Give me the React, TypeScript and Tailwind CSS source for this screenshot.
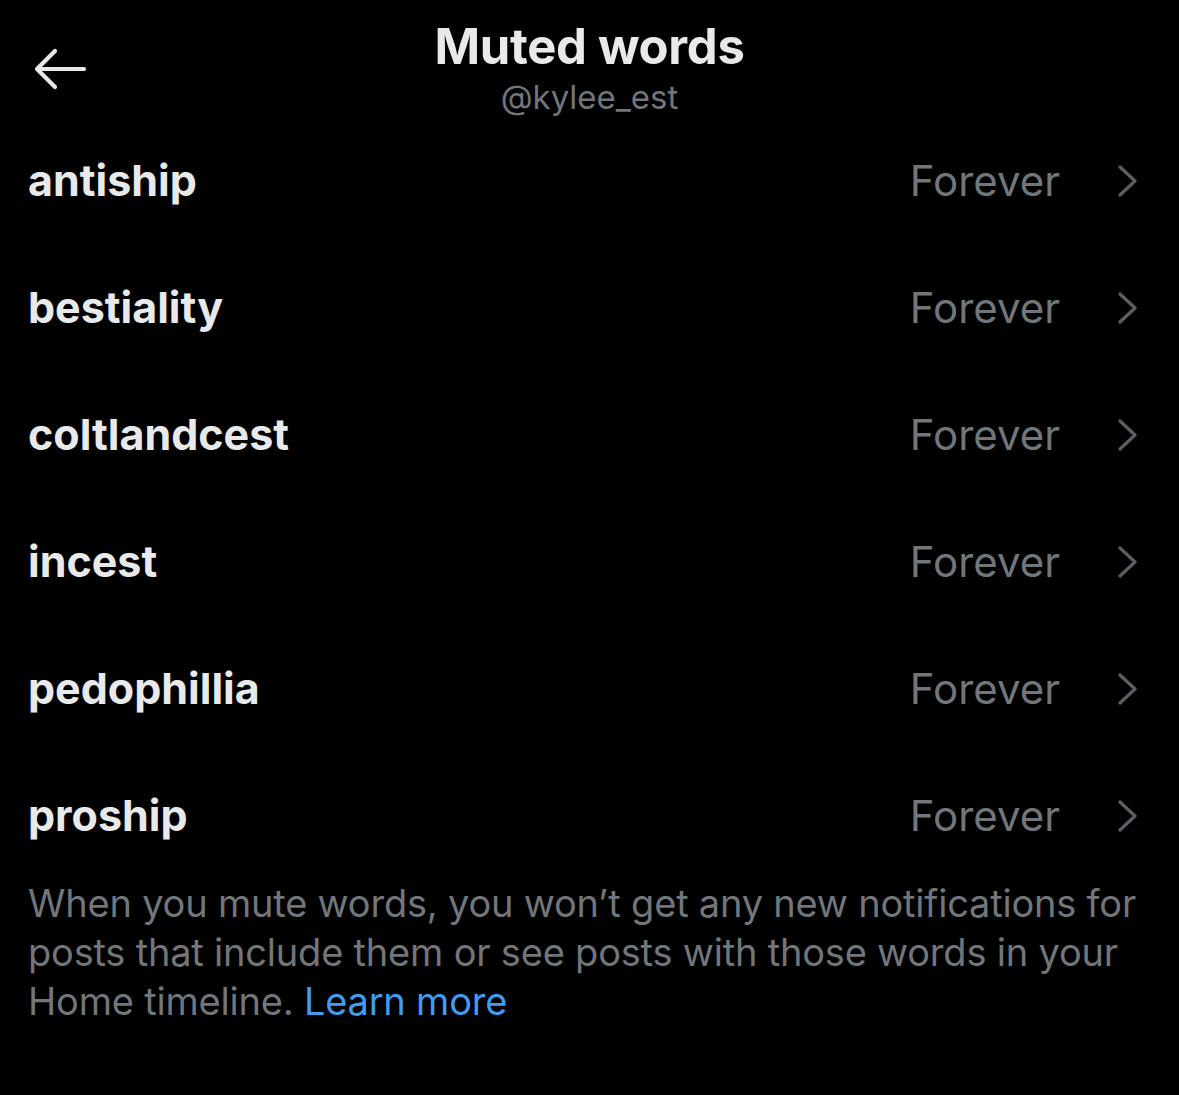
import React from "react";

const words = ["antiship", "bestiality", "coltlandcest", "incest", "pedophillia", "proship"];

function Row({ word }: { word: string }) {
  return (
    <div className="flex h-[127px] items-center pl-[28px] pr-[40px]">
      <div className="flex-1 text-[43px] font-bold text-[#e7e9ea]">{word}</div>
      <div className="text-[42px] text-[#71767b]">Forever</div>
      <svg className="ml-[57px] h-[32px] w-[22px]" viewBox="0 0 22 32" fill="none">
        <path d="M3 2 L18 16 L3 30" stroke="#5b5f64" strokeWidth="3.2" strokeLinecap="round" strokeLinejoin="round" />
      </svg>
    </div>
  );
}

export default function App() {
  return (
    <div className="min-h-[1095px] w-[1179px] bg-black" style={{ fontFamily: "Inter, 'Noto Sans', sans-serif" }}>
      <div className="relative flex h-[117px] flex-col items-center pt-[19px]">
        <svg className="absolute left-[33px] top-[48px] h-[42px] w-[54px]" viewBox="0 0 54 42" fill="none">
          <path d="M51 21 H5 M22 3 L4 21 L22 39" stroke="#e7e9ea" strokeWidth="4.2" strokeLinecap="round" strokeLinejoin="round" />
        </svg>
        <div className="text-[49px] font-bold leading-[56px] text-[#e7e9ea] tracking-[-0.3px]">Muted words</div>
        <div className="mt-[4px] text-[33px] leading-[36px] text-[#71767b]">@kylee_est</div>
      </div>
      <div>
        {words.map((w) => (
          <Row key={w} word={w} />
        ))}
      </div>
      <p className="px-[28px] text-[38px] leading-[49px] text-[#71767b] tracking-[-0.2px]">
        When you mute words, you won’t get any new notifications for posts that include them or see posts with those words in your Home timeline. <span className="text-[#3f9cf0]">Learn more</span>
      </p>
    </div>
  );
}
